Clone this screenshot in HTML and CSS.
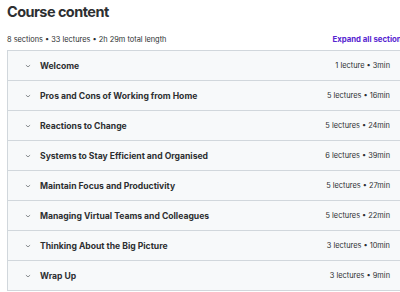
FILE: index.html
```html
<!DOCTYPE html>
<html lang="en">
<head>
<meta charset="utf-8">
<title>Course content</title>
<link rel="stylesheet" href="styles.css">
</head>
<body>
<div class="page">
  <h2 class="title">Course content</h2>
  <div class="meta-row">
    <span class="meta">8 sections • 33 lectures • 2h 29m total length</span>
    <button class="expand">Expand all sections</button>
  </div>
  <div class="sections">
    <div class="section"><svg class="chev" viewBox="0 0 10 6"><path d="M1.5 1.5 L5 4.5 L8.5 1.5"/></svg><span class="name">Welcome</span><span class="info">1 lecture • 3min</span></div>
    <div class="section"><svg class="chev" viewBox="0 0 10 6"><path d="M1.5 1.5 L5 4.5 L8.5 1.5"/></svg><span class="name">Pros and Cons of Working from Home</span><span class="info">5 lectures • 16min</span></div>
    <div class="section"><svg class="chev" viewBox="0 0 10 6"><path d="M1.5 1.5 L5 4.5 L8.5 1.5"/></svg><span class="name">Reactions to Change</span><span class="info">5 lectures • 24min</span></div>
    <div class="section"><svg class="chev" viewBox="0 0 10 6"><path d="M1.5 1.5 L5 4.5 L8.5 1.5"/></svg><span class="name">Systems to Stay Efficient and Organised</span><span class="info">6 lectures • 39min</span></div>
    <div class="section"><svg class="chev" viewBox="0 0 10 6"><path d="M1.5 1.5 L5 4.5 L8.5 1.5"/></svg><span class="name">Maintain Focus and Productivity</span><span class="info">5 lectures • 27min</span></div>
    <div class="section"><svg class="chev" viewBox="0 0 10 6"><path d="M1.5 1.5 L5 4.5 L8.5 1.5"/></svg><span class="name">Managing Virtual Teams and Colleagues</span><span class="info">5 lectures • 22min</span></div>
    <div class="section"><svg class="chev" viewBox="0 0 10 6"><path d="M1.5 1.5 L5 4.5 L8.5 1.5"/></svg><span class="name">Thinking About the Big Picture</span><span class="info">3 lectures • 10min</span></div>
    <div class="section"><svg class="chev" viewBox="0 0 10 6"><path d="M1.5 1.5 L5 4.5 L8.5 1.5"/></svg><span class="name">Wrap Up</span><span class="info">3 lectures • 9min</span></div>
  </div>
</div>
</body>
</html>
```
FILE: styles.css
```css
html, body {
  margin: 0;
  padding: 0;
  overflow: hidden;
  background: #ffffff;
}
body {
  font-family: Inter, "Noto Sans", "DejaVu Sans", sans-serif;
  color: #2d2f31;
}
.page {
  width: 399px;
  padding-left: 7px;
}
.title {
  margin: 0;
  padding-top: 2px;
  font-size: 14.5px;
  line-height: 20px;
  font-weight: 700;
  letter-spacing: -0.55px;
  color: #2d2f31;
}
.meta-row {
  display: flex;
  justify-content: space-between;
  align-items: center;
  margin-top: 11px;
  height: 12px;
  margin-bottom: 5px;
}
.meta {
  font-size: 7.4px;
  color: #2d2f31;
}
.expand {
  border: 0;
  background: none;
  padding: 0;
  font-family: inherit;
  font-size: 7.8px;
  font-weight: 700;
  color: #5624d0;
  white-space: nowrap;
}
.sections {
  border: 1px solid #d1d7dc;
  border-right: 0;
}
.section {
  display: flex;
  align-items: center;
  height: 29px;
  padding: 0 16px 0 17px;
  background: #f7f9fa;
  border-bottom: 1px solid #d1d7dc;
}
.section:last-child {
  border-bottom: 0;
}
.chev {
  width: 6px;
  height: 4px;
  fill: none;
  stroke: #6a6f73;
  stroke-width: 1.3;
  flex: none;
}
.name {
  margin-left: 9px;
  font-size: 8.6px;
  font-weight: 700;
  flex: 1;
}
.info {
  font-size: 7.4px;
  color: #2d2f31;
}
```
